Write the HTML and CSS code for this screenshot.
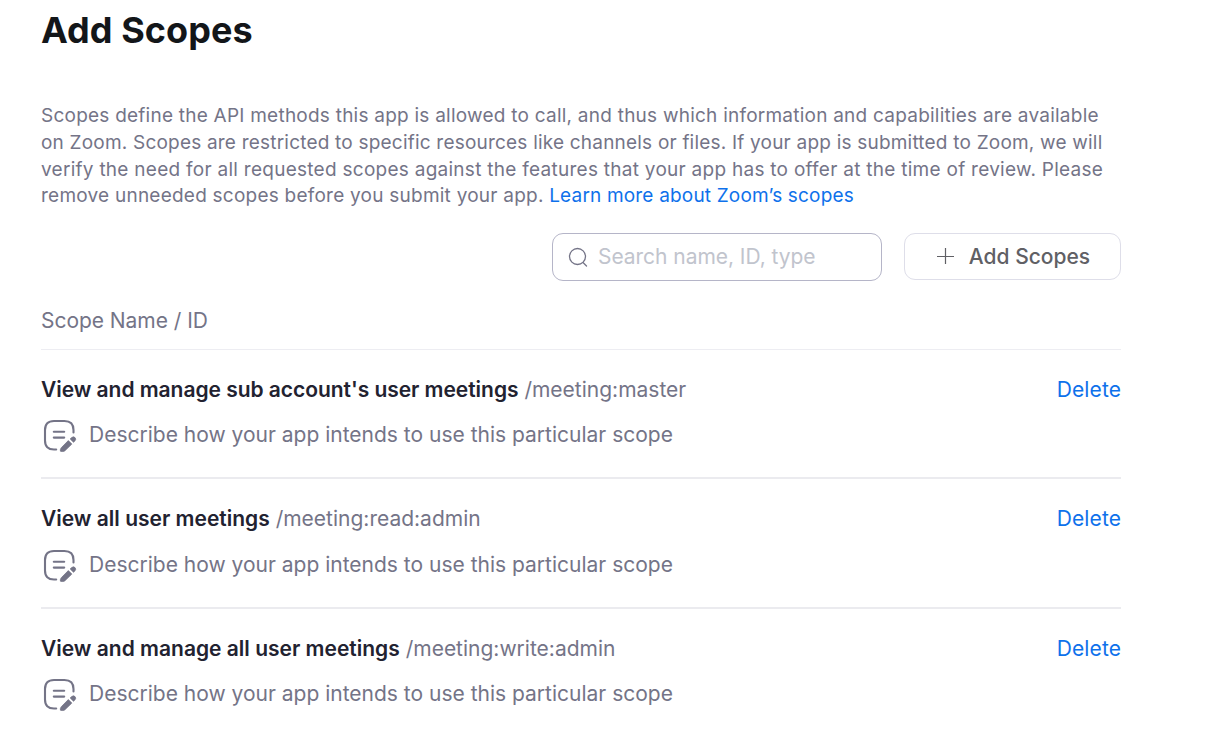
FILE: index.html
```html
<!DOCTYPE html>
<html lang="en">
<head>
<meta charset="utf-8">
<title>Add Scopes</title>
<link rel="stylesheet" href="styles.css">
</head>
<body>
<svg class="defs" width="0" height="0">
<symbol id="note" viewBox="0 0 34 34"><path d="M13.200 30.500H11Q2 30.500 2 21.500V11Q2 2 11 2H21.500Q30.500 2 30.500 11V13.500M10.800 12.700H21.200M10.800 18.600H21.200" fill="none" stroke="currentColor" stroke-width="2.100" stroke-linecap="round"/><path d="M17.400 32.200Q17 30.200 18.300 28.700L25.300 21.600L28.800 25.100L21.700 31.900Q19.800 33 17.400 32.200ZM27.200 19.900L28.800 18.500Q30.500 17.200 32 18.600Q33.400 20.200 32.100 21.700L30.500 23.200Z" fill="currentColor" stroke="currentColor" stroke-width=".8" stroke-linejoin="round"/></symbol>
</svg>
<main class="page">
<h1 class="title">Add Scopes</h1>
<p class="intro"><span class="line">Scopes define the API methods this app is allowed to call, and thus which information and capabilities are available</span> <span class="line tight">on Zoom. Scopes are restricted to specific resources like channels or files. If your app is submitted to Zoom, we will</span> <span class="line wide">verify the need for all requested scopes against the features that your app has to offer at the time of review. Please</span> <span class="line">remove unneeded scopes before you submit your app. <a class="link learn">Learn more about Zoom’s scopes</a></span></p>
<div class="toolbar">
<label class="search"><svg class="search-icon" viewBox="0 0 20 20"><path d="M15.500 16L18.500 19M17.500 9.500A8 8 0 1 1 1.500 9.500A8 8 0 0 1 17.500 9.500" fill="none" stroke="currentColor" stroke-width="1.300" stroke-linecap="round"/></svg><span>Search name, ID, type</span></label>
<button class="add"><svg class="plus" viewBox="0 0 18 18"><path d="M9.500 1V17M1 9.500H18" stroke="currentColor" stroke-width="1.200"/></svg><span>Add Scopes</span></button>
</div>
<div class="head">Scope Name / ID</div>
<section class="scope"><div class="row"><span><b class="long">View and manage sub account's user meetings</b> <span class="sid">/meeting:master</span></span><a class="link">Delete</a></div><div class="desc"><svg class="note"><use href="#note"/></svg><span>Describe how your app intends to use this particular scope</span></div></section>
<section class="scope"><div class="row"><span><b>View all user meetings</b> <span class="sid">/meeting:read:admin</span></span><a class="link">Delete</a></div><div class="desc low"><svg class="note"><use href="#note"/></svg><span>Describe how your app intends to use this particular scope</span></div></section>
<section class="scope"><div class="row"><span><b>View and manage all user meetings</b> <span class="sid">/meeting:write:admin</span></span><a class="link">Delete</a></div><div class="desc"><svg class="note"><use href="#note"/></svg><span>Describe how your app intends to use this particular scope</span></div></section>
</main>
</body>
</html>
```
FILE: styles.css
```css
* { box-sizing: border-box; }
body { margin: 0; background: #fff; font-family: Inter, "Liberation Sans", sans-serif; color: #747487; overflow: hidden; }
.defs { display: block; height: 0; }
.page { width: 1080px; margin-left: 41px; }
.title { margin: 0; padding-top: 8px; font-size: 36px; line-height: 44px; font-weight: 700; letter-spacing: .05px; color: #131619; }
.intro { margin: 51px 0 0; font-size: 19px; line-height: 26.800px; letter-spacing: .235px; white-space: nowrap; }
.line { display: block; }
.tight { letter-spacing: .205px; }
.wide { letter-spacing: .27px; }
.learn { letter-spacing: .18px; }
.link { color: #0e71eb; }
.toolbar { display: flex; justify-content: flex-end; gap: 22px; margin-top: 22.800px; font-size: 21px; }
.search { display: flex; align-items: center; width: 330px; height: 48px; padding: 0 15px 1px; border: 1px solid #b5b5c8; border-radius: 11px; color: #c1c4cd; }
.search-icon { width: 20px; height: 20px; margin: 2px 10px 0 0; color: #747487; }
.search span { letter-spacing: -.04px; }
.add { display: flex; align-items: center; justify-content: center; gap: 15px; width: 217px; height: 47px; padding: 0 0 1px 1px; border: 1px solid #dedee9; border-radius: 11px; background: #fff; font: 500 21px Inter, sans-serif; color: #606065; }
.add span { padding-top: 1px; }
.plus { width: 18px; height: 18px; }
.head { height: 69px; padding-top: 26px; border-bottom: 1px solid #ededf2; font-size: 21px; line-height: 28px; letter-spacing: -.04px; }
.scope { height: 129.500px; padding-top: 26px; border-bottom: 2px solid #ebebef; font-size: 21px; }
.scope:last-child { border: 0; }
.row { display: flex; justify-content: space-between; line-height: 28px; }
.row b { font-weight: 600; color: #222230; }
.row .long { letter-spacing: -.04px; }
.row .link { letter-spacing: .1px; }
.desc { display: flex; align-items: center; gap: 12px; height: 34px; margin: 15px 0 0 2px; }
.desc span { padding-bottom: 2px; }
.low { margin-top: 15.600px; }
.low span { padding-bottom: 3.400px; }
.note { width: 34px; height: 34px; }
```
